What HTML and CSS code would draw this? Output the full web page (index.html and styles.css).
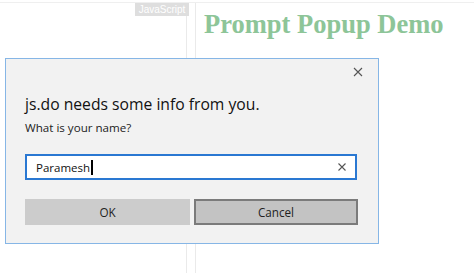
FILE: index.html
```html
<!DOCTYPE html>
<html>
<head>
<meta charset="utf-8">
<link rel="stylesheet" href="styles.css">
</head>
<body>
<div class="page">
  <div class="editor"><span class="tag">JavaScript</span></div>
  <div class="gutter"></div>
  <div class="output"><h1 class="title">Prompt Popup Demo</h1></div>
</div>
<div class="dialog">
  <div class="dialog-head">
    <svg class="close" width="10" height="10" viewBox="0 0 10 10"><path d="M1 1L9 9M9 1L1 9" stroke="#555" stroke-width="1.1" fill="none"/></svg>
  </div>
  <div class="heading">js.do needs some info from you.</div>
  <div class="question">What is your name?</div>
  <div class="field">
    <span class="value">Paramesh</span><span class="caret"></span>
    <svg class="clear" width="10" height="10" viewBox="0 0 10 10"><path d="M1.5 1.5L8.5 8.5M8.5 1.5L1.5 8.5" stroke="#555" stroke-width="1.1" fill="none"/></svg>
  </div>
  <div class="buttons">
    <div class="btn ok">OK</div>
    <div class="btn cancel">Cancel</div>
  </div>
</div>
</body>
</html>
```
FILE: styles.css
```css
html, body {
  margin: 0;
  padding: 0;
  background: #ffffff;
  width: 474px;
  height: 273px;
  overflow: hidden;
  position: relative;
}
.page {
  display: flex;
  margin-top: 2px;
  border-top: 1px solid #efefef;
  height: 270px;
}
.editor {
  width: 186px;
  border-right: 1px solid #eaeaea;
  display: flex;
  justify-content: flex-end;
  align-items: flex-start;
}
.tag {
  margin-right: -3px;
  width: 54px;
  height: 13px;
  background: #dedede;
  color: #ffffff;
  font-family: "Liberation Sans", Arial, sans-serif;
  font-size: 10px;
  line-height: 13px;
  text-align: center;
  position: relative;
}
.gutter {
  width: 8px;
}
.output {
  flex: 1;
  border-left: 1px solid #eaeaea;
  padding-left: 8px;
}
.title {
  margin: 6px 0 0 0;
  font-family: "Liberation Serif", "Times New Roman", serif;
  font-weight: bold;
  font-size: 26.5px;
  line-height: 30px;
  color: #8dc598;
  white-space: nowrap;
}
.dialog {
  position: absolute;
  left: 5px;
  top: 58px;
  width: 374px;
  height: 186px;
  border: 1px solid #86b6e6;
  background: #f2f2f2;
  padding: 0 20px 18px 19px;
  box-sizing: border-box;
  display: flex;
  flex-direction: column;
  font-family: "Open Sans", "Noto Sans", sans-serif;
}
.dialog-head {
  height: 34px;
  display: flex;
  justify-content: flex-end;
  align-items: flex-start;
}
.close {
  margin-top: 8px;
  margin-right: -5px;
}
.heading {
  font-size: 15.7px;
  line-height: 22px;
  color: #111;
}
.question {
  margin-top: 5px;
  font-size: 11.6px;
  line-height: 16px;
  color: #222;
}
.field {
  margin-top: 18px;
  height: 26px;
  border: 2px solid #2a78d2;
  background: #ffffff;
  box-sizing: border-box;
  display: flex;
  align-items: center;
  padding-left: 9px;
  padding-right: 8px;
  width: 332px;
}
.value {
  font-size: 11.5px;
  color: #111;
}
.caret {
  width: 1.5px;
  height: 15px;
  background: #000;
  margin-left: 1px;
}
.clear {
  margin-left: auto;
}
.buttons {
  margin-top: 19px;
  display: flex;
  gap: 4px;
  width: 333px;
}
.btn {
  height: 26px;
  box-sizing: border-box;
  display: flex;
  align-items: center;
  justify-content: center;
  font-size: 11.7px;
  color: #222;
}
.ok {
  width: 165px;
  background: #cccccc;
}
.cancel {
  width: 164px;
  background: #c3c3c3;
  border: 2px solid #7b7b7b;
}
```
